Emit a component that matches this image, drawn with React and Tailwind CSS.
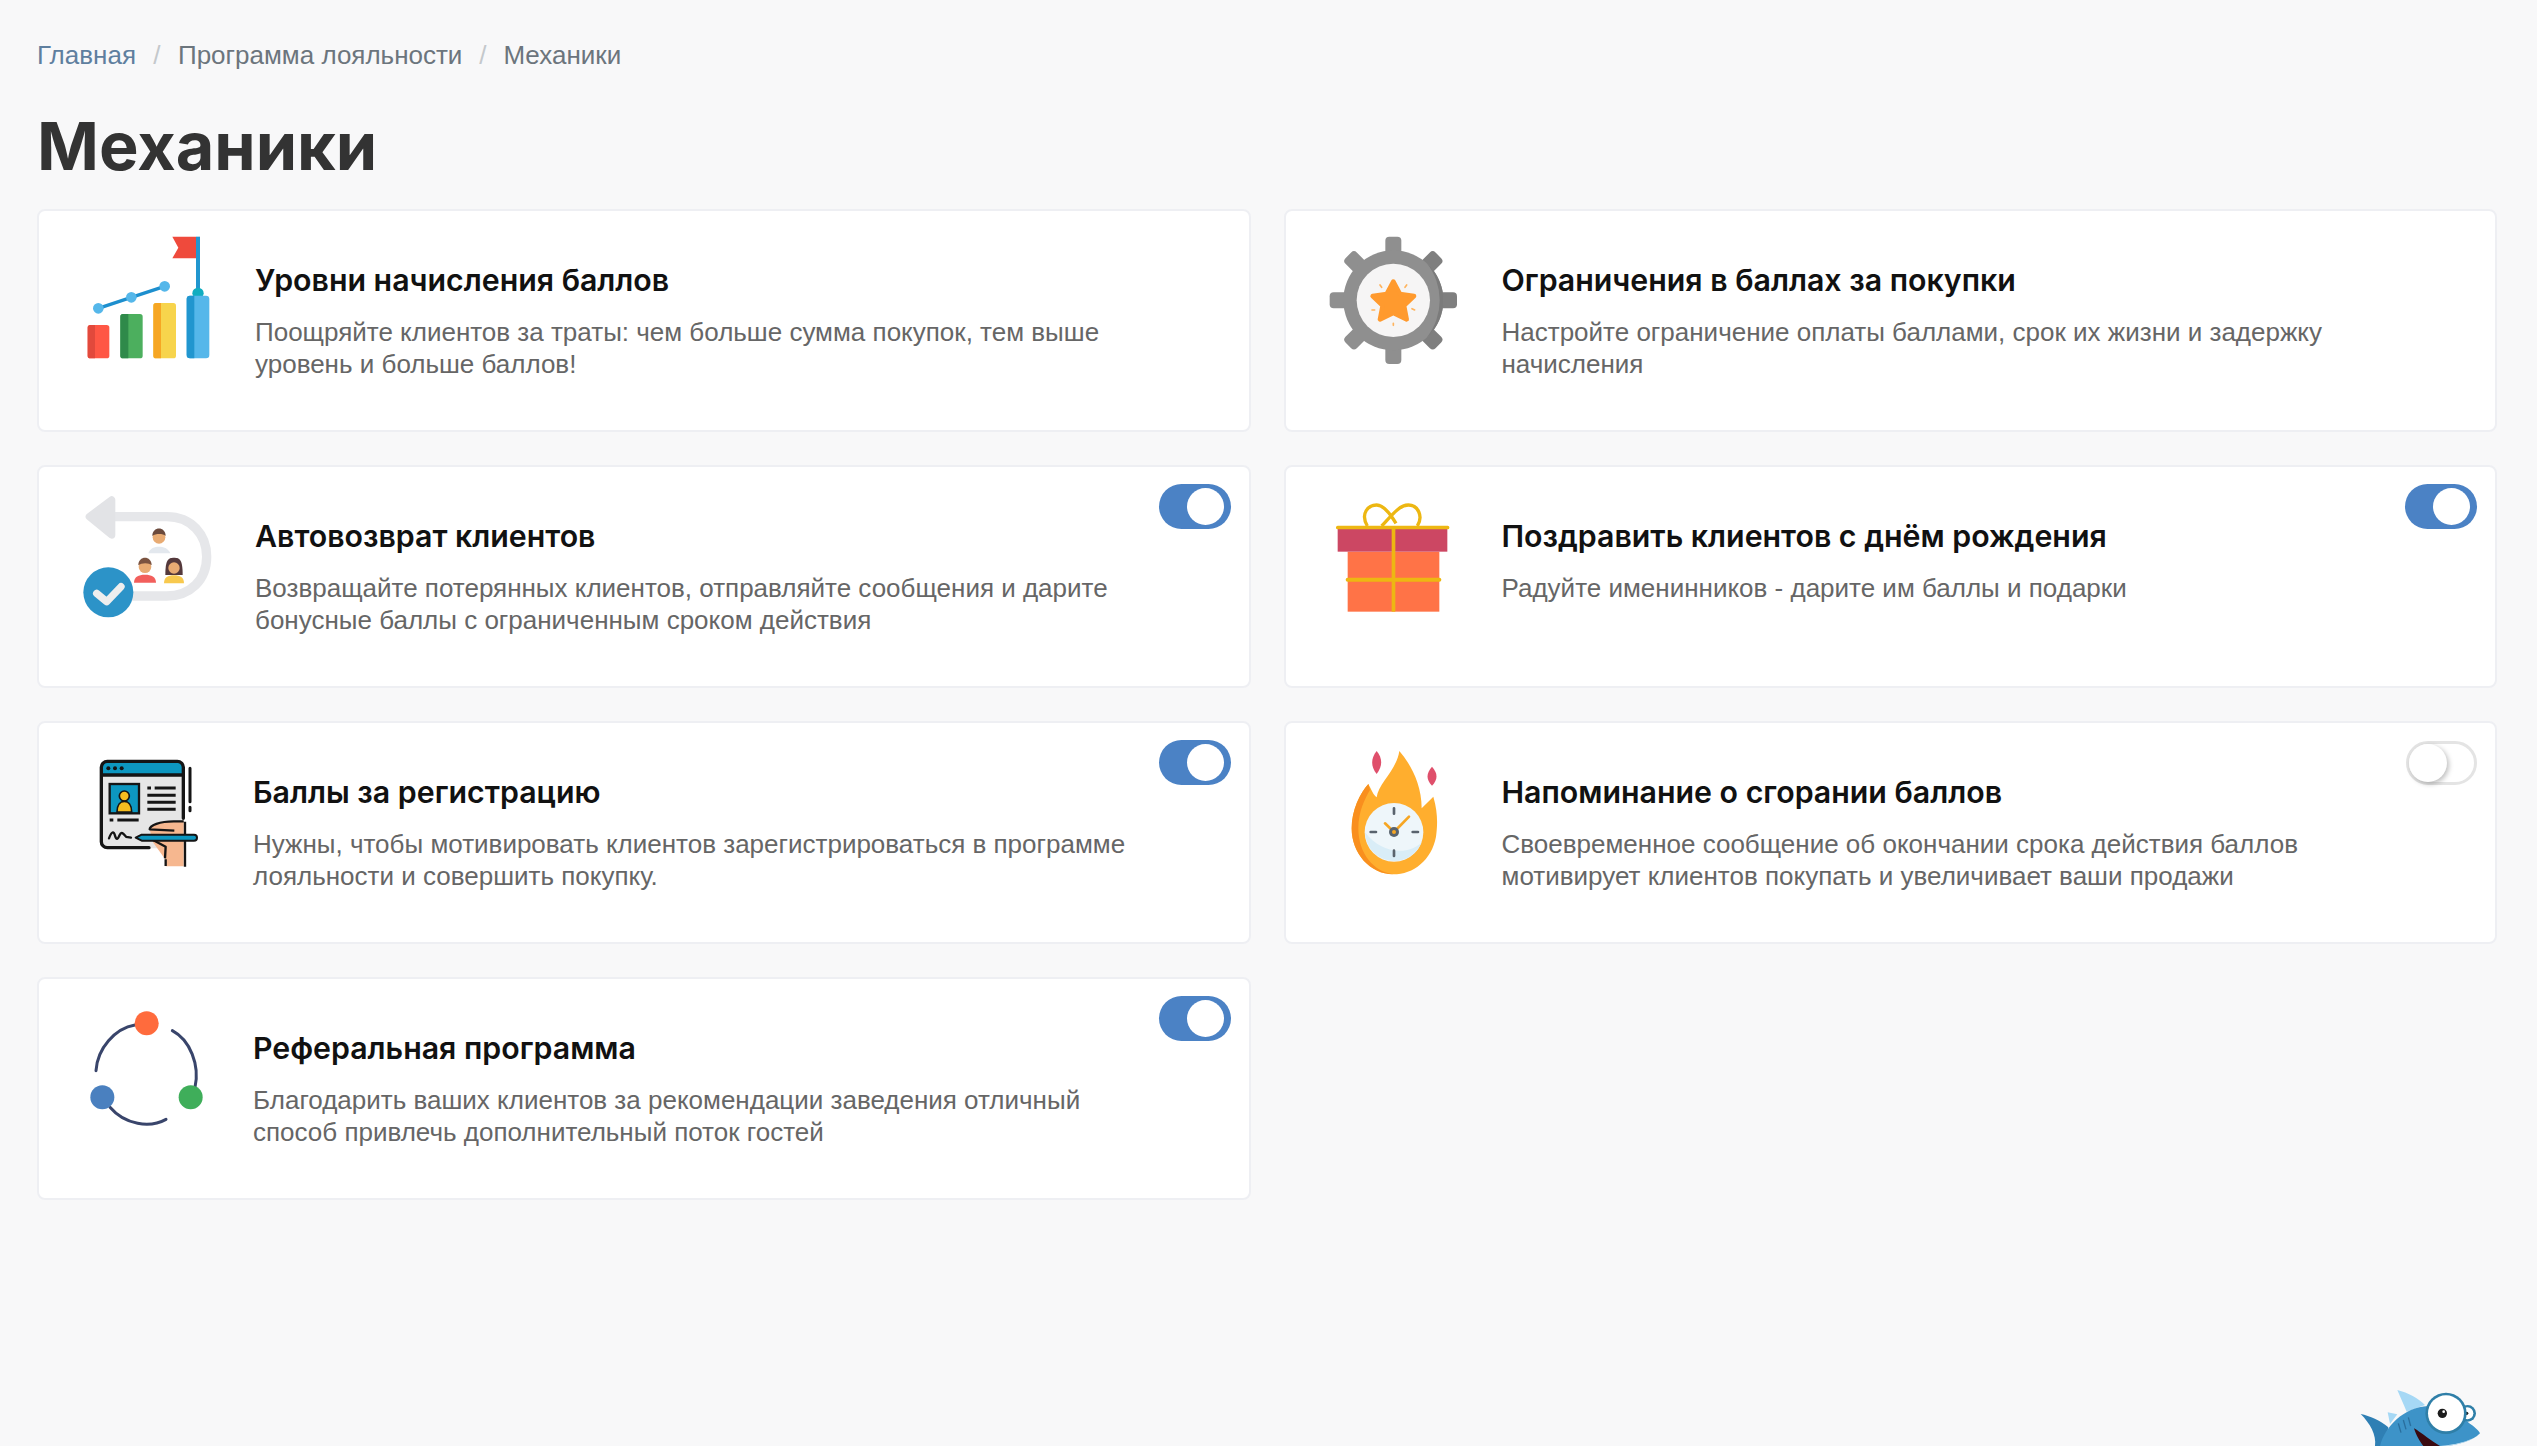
import React from 'react';

const LevelsIcon = () => (
  <svg width="170" height="150" viewBox="0 0 510 450">
    <rect x="83" y="300" width="65" height="100" rx="8" fill="#ff5745" />
    <path d="M91 300h14v100H91a8 8 0 0 1-8-8v-84a8 8 0 0 1 8-8z" fill="#e2493c" />
    <rect x="181" y="267" width="67" height="133" rx="8" fill="#4caf5e" />
    <path d="M189 267h16v133h-16a8 8 0 0 1-8-8V275a8 8 0 0 1 8-8z" fill="#2f8a4a" />
    <rect x="280" y="234" width="68" height="166" rx="8" fill="#f7d44c" />
    <path d="M288 234h15v166h-15a8 8 0 0 1-8-8V242a8 8 0 0 1 8-8z" fill="#f6a623" />
    <rect x="408" y="35" width="12" height="165" fill="#2196cf" />
    <circle cx="414" cy="205" r="17" fill="#11adc0" />
    <rect x="380" y="212" width="68" height="188" rx="10" fill="#55b7ea" />
    <path d="M390 212h13v188h-13a10 10 0 0 1-10-10V222a10 10 0 0 1 10-10z" fill="#2196cf" />
    <polygon points="337,35 408,35 408,100 337,100 355,68" fill="#ef4a3c" />
    <polyline points="115,250 214,217 314,184" fill="none" stroke="#1d8fce" strokeWidth="10" />
    <circle cx="115" cy="250" r="16" fill="#55b7ea" />
    <circle cx="214" cy="217" r="16" fill="#55b7ea" />
    <circle cx="314" cy="184" r="16" fill="#55b7ea" />
  </svg>
);

const LimitsIcon = () => {
  const teeth = [0, 45, 90, 135, 180, 225, 270, 315];
  return (
    <svg width="170" height="150" viewBox="0 0 510 450">
      {teeth.map((a) => (
        <rect key={a} x="226" y="50" width="48" height="80" rx="12" fill={a === 45 || a === 90 || a === 135 ? '#7f7f7f' : '#8f8f8f'} transform={`rotate(${a} 250 241)`} />
      ))}
      <circle cx="250" cy="241" r="150" fill="#8f8f8f" />
      <path d="M350 129a150 150 0 0 1 0 224a180 180 0 0 0 0-224z" fill="#7b7b7b" />
      <circle cx="250" cy="241" r="110" fill="#f6f5f5" />
      <polygon points="250,185 270,222 312,228 282,257 290,298 250,279 210,298 218,257 188,228 230,222" fill="#ff9a2e" stroke="#ff9a2e" strokeWidth="14" strokeLinejoin="round" />
      <g stroke="#ffb45e" strokeWidth="5" strokeLinecap="round">
        <path d="M210 195l5 7M290 195l-5 7M186 270h8M306 266l8 4M250 310v6" />
      </g>
    </svg>
  );
};

const ReturnIcon = () => (
  <svg width="170" height="150" viewBox="0 0 510 450">
    <path d="M150 110H320C395 110 440 165 440 230C440 300 390 348 320 348H200" fill="none" stroke="#e6e7ea" strokeWidth="28" />
    <polygon points="88,110 155,60 155,165" fill="#e2e3e6" stroke="#e2e3e6" strokeWidth="22" strokeLinejoin="round" />
    <path d="M265 220c4-16 20-20 32-20s28 4 34 20z" fill="#e3e8ee" />
    <circle cx="297" cy="172" r="19" fill="#e8ab73" />
    <path d="M277 168c0-30 40-30 40 0c-8-8-30-8-40 0z" fill="#6b4a3c" />
    <path d="M222 308c0-18 14-24 33-24s33 6 33 24z" fill="#f25f5c" />
    <circle cx="255" cy="260" r="19" fill="#e8ab73" />
    <path d="M235 256c0-30 40-30 40 0c-8-8-30-8-40 0z" fill="#7b5340" />
    <path d="M316 285c0-45 8-52 26-52s26 7 26 52z" fill="#54393c" />
    <path d="M312 310c0-18 12-24 30-24s30 6 30 24z" fill="#f8c94e" />
    <circle cx="342" cy="264" r="17" fill="#e8ab73" />
    <circle cx="145" cy="337" r="75" fill="#2c93c8" />
    <polyline points="110,340 140,365 183,320" fill="none" stroke="#eeeeee" strokeWidth="22" strokeLinecap="round" strokeLinejoin="round" />
  </svg>
);

const GiftIcon = () => (
  <svg width="170" height="150" viewBox="0 0 510 450">
    <rect x="113" y="185" width="275" height="180" fill="#ff7347" />
    <rect x="83" y="115" width="329" height="70" fill="#cc4763" />
    <rect x="245" y="115" width="11" height="250" fill="#edb712" />
    <rect x="107" y="263" width="287" height="12" rx="6" fill="#edb712" />
    <rect x="78" y="107" width="340" height="11" rx="5" fill="#edb712" />
    <path d="M172 108C150 70 175 45 200 45C220 45 240 70 258 100M215 108C250 70 270 45 295 45C325 45 340 80 322 108" fill="none" stroke="#edb712" strokeWidth="10" />
  </svg>
);

const RegisterIcon = () => (
  <svg width="170" height="150" viewBox="0 0 510 450">
    <path d="M125 82a20 20 0 0 1 20-20h210a20 20 0 0 1 20 20v23H125z" fill="#0d97c0" />
    <path d="M125 105h250v220H145a20 20 0 0 1-20-20z" fill="#e6e6e6" />
    <path d="M373 235V82a18 18 0 0 0-18-18H145a18 18 0 0 0-18 18V305a18 18 0 0 0 18 18H270M127 105H373" fill="none" stroke="#151515" strokeWidth="10" strokeLinecap="round" />
    <circle cx="148" cy="85" r="6" fill="#151515" />
    <circle cx="168" cy="85" r="6" fill="#151515" />
    <circle cx="188" cy="85" r="6" fill="#151515" />
    <rect x="152" y="132" width="88" height="88" fill="#0d97c0" stroke="#151515" strokeWidth="7" />
    <circle cx="196" cy="168" r="15" fill="#f5bd1f" stroke="#151515" strokeWidth="5" />
    <path d="M174 216c0-22 10-32 22-32s22 10 22 32z" fill="#f5bd1f" stroke="#151515" strokeWidth="5" />
    <g stroke="#151515" strokeWidth="9" fill="none">
      <path d="M265 144h11M287 144h63M265 166h85M265 187h85M265 208h85M152 240h11M175 240h64" />
      <path d="M393 85V185M393 202v10" strokeLinecap="round" />
      <path d="M150 295c8-22 14-22 18-8s8 12 14-2s14 0 20 6l14 2" strokeWidth="7" strokeLinecap="round" />
    </g>
    <path d="M272 268c2-10 30-24 72-24h30v135h-54l-2-22l-36-50l-6-22z" fill="#f6b78f" />
    <path d="M374 244h-30c-42 0-72 12-72 24l74 4M282 300l38 20l-2 35M320 378v-20M378 245v135" fill="none" stroke="#151515" strokeWidth="7" strokeLinejoin="round" />
    <path d="M230 293l18-9H405a9 9 0 0 1 0 18H248z" fill="#0d97c0" stroke="#151515" strokeWidth="6" strokeLinejoin="round" />
  </svg>
);

const BurnIcon = () => (
  <svg width="170" height="150" viewBox="0 0 510 450">
    <path d="M200 33C218 55 218 78 200 102C182 80 182 55 200 33z" fill="#df4f6b" />
    <path d="M366 80C384 100 384 118 366 137C348 118 348 100 366 80z" fill="#df4f6b" />
    <path d="M268 33C300 70 335 130 335 205L370 170C385 220 382 260 378 290C365 360 310 403 250 403C180 403 125 340 125 265C125 210 150 160 175 132C185 150 190 165 200 172C205 130 260 90 268 33z" fill="#ffae2e" />
    <path d="M175 132C150 160 125 210 125 265C125 340 180 403 250 403C190 395 145 340 145 265C145 215 165 175 180 150z" fill="#f98f1e" />
    <circle cx="252" cy="277" r="88" fill="#eef6fa" />
    <path d="M165 277a88 88 0 0 0 170 30C300 345 215 345 165 277z" fill="#d9edf7" />
    <path d="M252 205v16M252 332v16M182 276h16M308 276h16" stroke="#59636d" strokeWidth="8" strokeLinecap="round" />
    <path d="M225 250l27 26l45-46" fill="none" stroke="#f6a623" strokeWidth="8" strokeLinecap="round" strokeLinejoin="round" />
    <circle cx="252" cy="276" r="15" fill="#59636d" />
    <circle cx="252" cy="276" r="6" fill="#f6a623" />
  </svg>
);

const ReferralIcon = () => (
  <svg width="170" height="150" viewBox="0 0 510 450">
    <g fill="none" stroke="#39456b" strokeWidth="9" strokeLinecap="round">
      <path d="M108 212C112 145 165 85 225 75" />
      <path d="M337 92C390 120 420 195 405 262" />
      <path d="M150 322C195 375 270 385 318 358" />
    </g>
    <circle cx="260" cy="70" r="36" fill="#ff6b3d" />
    <circle cx="392" cy="292" r="36" fill="#3fae5a" />
    <circle cx="127" cy="292" r="36" fill="#4a80bf" />
  </svg>
);

const Shark = () => (
  <svg width="197" height="76" viewBox="0 0 591 228">
    <path d="M172 60C205 68 235 85 255 105L200 125C190 100 180 80 172 60z" fill="#a6d8f5" />
    <path d="M143 127L172 133L150 162z" fill="#a6d8f5" />
    <path d="M62 132C90 138 120 150 145 172L135 228H105C110 195 90 160 62 132z" fill="#2f7fb4" />
    <path d="M120 228C135 170 190 112 265 108L375 150C395 165 415 178 420 190C400 212 350 228 310 228z" fill="#3d93c8" />
    <path d="M222 175C232 180 250 195 280 215L300 228H250C240 215 228 195 222 175z" fill="#3a0a10" />
    <path d="M300 228C340 225 385 215 412 198L420 190C400 212 350 228 310 228z" fill="#d9eef9" />
    <path d="M175 160l8 28M190 150l8 28M205 142l7 26" stroke="#2a6f9e" strokeWidth="4" />
    <circle cx="383" cy="130" r="25" fill="#2f7fa8" />
    <circle cx="382" cy="130" r="18" fill="#ffffff" />
    <circle cx="380" cy="130" r="5" fill="#222222" />
    <circle cx="318" cy="130" r="62" fill="#2f7fa8" />
    <circle cx="318" cy="130" r="54" fill="#ffffff" />
    <circle cx="307" cy="130" r="14" fill="#1d1d1d" />
    <circle cx="311" cy="125" r="4" fill="#ffffff" />
  </svg>
);

function Toggle({ on }) {
  if (!on) {
    return (
      <div className="absolute top-[18px] right-[18px] w-[71px] h-[44px] rounded-full bg-white border-[3px] border-[#e4e4e4]">
        <div className="w-[38px] h-[38px] rounded-full bg-white shadow-[2px_2px_5px_rgba(0,0,0,0.25)]" />
      </div>
    );
  }
  return (
    <div className="absolute top-[17px] right-[18px] w-[72px] h-[45px] rounded-full bg-[#4b82c5] flex items-center justify-end pr-[7px]">
      <div className="w-[37px] h-[37px] rounded-full bg-white" />
    </div>
  );
}

function Card({ icon, iconClass, title, text, toggle }) {
  return (
    <div className="relative h-[223px] bg-white border-2 border-[#eeeff3] rounded-[8px] flex items-start">
      <div className={iconClass}>{icon}</div>
      <div className="pt-[49px] max-w-[900px]">
        <h3 className="font-['Inter',sans-serif] font-semibold text-[30.3px] leading-[40px] text-[#111111] mb-[16px]">{title}</h3>
        <p className="font-['Liberation_Sans',sans-serif] text-[26px] leading-[32px] text-[#666666]">{text}</p>
      </div>
      {toggle !== undefined && <Toggle on={toggle} />}
    </div>
  );
}

const cards = [
  {
    icon: <LevelsIcon />,
    iconClass: 'ml-[21px] mt-[14px] mr-[25px]',
    title: 'Уровни начисления баллов',
    text: 'Поощряйте клиентов за траты: чем больше сумма покупок, тем выше уровень и больше баллов!',
  },
  {
    icon: <LimitsIcon />,
    iconClass: 'ml-[24px] mt-[9px] mr-[22px]',
    title: 'Ограничения в баллах за покупки',
    text: 'Настройте ограничение оплаты баллами, срок их жизни и задержку начисления',
  },
  {
    icon: <ReturnIcon />,
    iconClass: 'ml-[21px] mt-[13px] mr-[25px]',
    title: 'Автовозврат клиентов',
    text: 'Возвращайте потерянных клиентов, отправляйте сообщения и дарите бонусные баллы с ограниченным сроком действия',
    toggle: true,
  },
  {
    icon: <GiftIcon />,
    iconClass: 'ml-[24px] mt-[23px] mr-[22px]',
    title: 'Поздравить клиентов с днём рождения',
    text: 'Радуйте именинников - дарите им баллы и подарки',
    toggle: true,
  },
  {
    icon: <RegisterIcon />,
    iconClass: 'ml-[20px] mt-[17px] mr-[24px]',
    title: 'Баллы за регистрацию',
    text: 'Нужны, чтобы мотивировать клиентов зарегистрироваться в программе лояльности и совершить покупку.',
    toggle: true,
  },
  {
    icon: <BurnIcon />,
    iconClass: 'ml-[24px] mt-[17px] mr-[22px]',
    title: 'Напоминание о сгорании баллов',
    text: 'Своевременное сообщение об окончании срока действия баллов мотивирует клиентов покупать и увеличивает ваши продажи',
    toggle: false,
  },
  {
    icon: <ReferralIcon />,
    iconClass: 'ml-[21px] mt-[21px] mr-[23px]',
    title: 'Реферальная программа',
    text: 'Благодарить ваших клиентов за рекомендации заведения отличный способ привлечь дополнительный поток гостей',
    toggle: true,
  },
];

function App() {
  return (
    <div className="relative h-[1446px] overflow-hidden bg-[#f8f8f9] pl-[37px] pr-[40px]">
      {/* хлебные крошки */}
      <nav className="pt-[39px] flex items-center font-['Liberation_Sans',sans-serif] text-[26px] leading-[32px] text-[#6c757d]">
        <span className="text-[#5f7f9f]">Главная</span>
        <span className="w-[42px] text-center text-[#c4c8cc]">/</span>
        <span>Программа лояльности</span>
        <span className="w-[41px] text-center text-[#c4c8cc]">/</span>
        <span>Механики</span>
      </nav>

      <h1 className="mt-[35px] mb-[23px] font-['Inter',sans-serif] font-bold text-[66.5px] leading-[80px] text-[#333333]">Механики</h1>

      <div className="grid grid-cols-2 gap-x-[33px] gap-y-[33px]">
        {cards.map((card) => (
          <Card key={card.title} {...card} />
        ))}
      </div>

      {/* акула-помощник */}
      <div className="absolute right-0 bottom-0">
        <Shark />
      </div>
    </div>
  );
}

export default App;
